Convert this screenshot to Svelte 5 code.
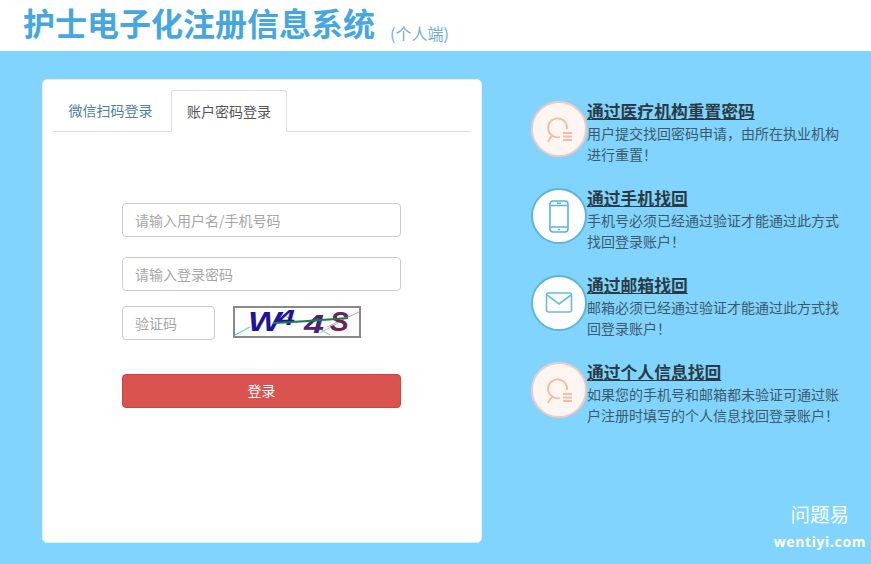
<script>
  const items = [
    { t: '通过医疗机构重置密码', d: ['用户提交找回密码申请，由所在执业机构', '进行重置！'], k: 'user' },
    { t: '通过手机找回', d: ['手机号必须已经通过验证才能通过此方式', '找回登录账户！'], k: 'phone' },
    { t: '通过邮箱找回', d: ['邮箱必须已经通过验证才能通过此方式找', '回登录账户！'], k: 'mail' },
    { t: '通过个人信息找回', d: ['如果您的手机号和邮箱都未验证可通过账', '户注册时填写的个人信息找回登录账户！'], k: 'user' }
  ];
</script>

<div class="page">
  <header class="top">
    <h1>护士电子化注册信息系统</h1>
    <span class="sub">(个人端)</span>
  </header>
  <main class="main">
    <section class="card">
      <nav class="tabs">
        <span class="tab first">微信扫码登录</span>
        <span class="tab active">账户密码登录</span>
      </nav>
      <form class="form">
        <input class="field" placeholder="请输入用户名/手机号码" />
        <input class="field" placeholder="请输入登录密码" />
        <div class="code-row">
          <input class="field code" placeholder="验证码" />
          <svg class="captcha" viewBox="0 0 128 32" width="128" height="32">
            <rect x="1" y="1" width="126" height="30" fill="#fdfdfd" stroke="#8a8a8a" stroke-width="2" />
            <path d="M2 29 L17 21" stroke="#5fd6c8" stroke-width="1.4" fill="none" />
            <path d="M45 6 L64 17 M85 22 L97 29" stroke="#c9a9a0" stroke-width="1" fill="none" />
            <path d="M94 21 L126 6" stroke="#c9a0a8" stroke-width="1" fill="none" />
            <path d="M87 27 L107 16" stroke="#7fd8d0" stroke-width="1" fill="none" />
            <text x="15" y="25" class="cap c1" textLength="33" lengthAdjust="spacingAndGlyphs">W</text>
            <text x="45" y="19" class="cap c2" textLength="17" lengthAdjust="spacingAndGlyphs">4</text>
            <text x="71" y="27" class="cap c3" textLength="20" lengthAdjust="spacingAndGlyphs">4</text>
            <text x="97" y="25" class="cap c4">S</text>
            <path d="M40 17 C65 16 90 14 115 12" stroke="#1a7a4a" stroke-width="2" fill="none" />
          </svg>
        </div>
        <button type="button" class="submit">登录</button>
      </form>
    </section>
    <aside class="list">
      {#each items as it}
        <article class="item">
          <div class="circle {it.k === 'user' ? 'pink' : 'blue'}">
            {#if it.k === 'user'}
              <svg viewBox="0 0 40 40" width="40" height="40" fill="none" stroke="#f7b9aa" stroke-width="1.8">
                <path d="M21 28 A9.500 9.500 0 1 1 28 20" />
                <path d="M14 26 C12 28 10 30 9 33" />
                <path d="M24 24 H33 M24 27.500 H33 M24 31 H33" stroke-width="1.800" />
              </svg>
            {:else if it.k === 'phone'}
              <svg viewBox="0 0 40 40" width="40" height="40" fill="none" stroke="#58b4dc" stroke-width="1.6">
                <rect x="11" y="5" width="18" height="31" rx="3" />
                <path d="M11.500 9.500 H28.500 M11.500 31 H28.500" />
                <path d="M18 7.300 H22 M19 33.500 H21" />
              </svg>
            {:else}
              <svg viewBox="0 0 40 40" width="40" height="40" fill="none" stroke="#6cbcd8" stroke-width="1.6">
                <rect x="7.500" y="10" width="25" height="19" rx="2" />
                <path d="M8 12 L20 21 L32 12" />
              </svg>
            {/if}
          </div>
          <div class="info">
            <h3>{it.t}</h3>
            {#each it.d as line}<p>{line}</p>{/each}
          </div>
        </article>
      {/each}
    </aside>
  </main>
  <div class="mark">
    <span class="m1">问题易</span>
    <span class="m2">wentiyi.com</span>
  </div>
</div>

<style>
  :global(body) { margin: 0; }
  .page {
    position: relative;
    width: 871px;
    height: 564px;
    overflow: hidden;
    background: #81d4fe;
    font-family: "Noto Sans CJK SC", "Liberation Sans", sans-serif;
  }
  .top {
    height: 51px;
    box-sizing: border-box;
    background: #fff;
    padding-left: 23px;
    display: flex;
    align-items: flex-start;
  }
  h1 {
    margin: 0;
    font-size: 32px;
    line-height: 44px;
    font-weight: 700;
    color: #46a7e0;
  }
  .sub {
    margin: 21px 0 0 15px;
    font-size: 16px;
    line-height: 24px;
    color: #6eaed8;
  }
  .main {
    display: flex;
    padding: 28px 0 0 42px;
  }
  .card {
    box-sizing: border-box;
    width: 440px;
    height: 464px;
    background: #fff;
    border-radius: 5px;
    border: 1px solid #e4eef4;
    padding: 10px 10px 0;
  }
  .tabs {
    display: flex;
    height: 41px;
    border-bottom: 1px solid #ddd;
  }
  .tab {
    box-sizing: border-box;
    width: 116px;
    height: 42px;
    font-size: 14px;
    line-height: 40px;
    text-align: center;
    color: #4d7fa0;
  }
  .first { width: 118px; padding-right: 3px; }
  .active {
    color: #555;
    background: #fff;
    border: 1px solid #ddd;
    border-bottom-color: #fff;
    border-radius: 3px 3px 0 0;
  }
  .form {
    display: flex;
    flex-direction: column;
    padding: 71px 0 0 69px;
    width: 279px;
  }
  .field {
    box-sizing: border-box;
    width: 279px;
    height: 34px;
    padding: 0 12px;
    border: 1px solid #ccc;
    border-radius: 4px;
    font: 14px "Noto Sans CJK SC", sans-serif;
    background: #fff;
    outline: none;
    margin-bottom: 20px;
  }
  .field::placeholder { color: #a6a6a6; opacity: 1; }
  .code-row {
    display: flex;
    align-items: flex-start;
    gap: 18px;
    margin-top: -5px;
  }
  .code { width: 93px; margin: 0; }
  .captcha { display: block; }
  .cap {
    font-family: "Liberation Sans", sans-serif;
    font-weight: 700;
    font-style: italic;
  }
  .c1 { font-size: 27px; fill: #1c1499; }
  .c2 { font-size: 22px; fill: #1c1499; }
  .c3 { font-size: 25px; fill: #4a2378; }
  .c4 { font-size: 28px; fill: #6a2458; }
  .submit {
    margin-top: 34px;
    width: 279px;
    height: 34px;
    border: 1px solid #d43f3a;
    border-radius: 4px;
    background: #d9534f;
    color: #fff;
    font: 14px/30px "Noto Sans CJK SC", sans-serif;
    padding: 0 0 2px;
  }
  .list {
    display: flex;
    flex-direction: column;
    gap: 21px;
    margin: 21px 0 0 49px;
  }
  .item {
    display: flex;
    height: 66px;
  }
  .circle {
    box-sizing: border-box;
    width: 56px;
    height: 56px;
    margin-top: 1px;
    border-radius: 50%;
    background: #fff;
    display: flex;
    align-items: center;
    justify-content: center;
    flex: none;
    border: 2px solid;
  }
  .pink { border-color: #f4c9c4; background: #fff6f2; }
  .blue { border-color: #5fb4dc; }
  .info { width: 260px; color: #3c5a6a; margin-top: -1px; }
  h3 {
    margin: 0;
    font-size: 16.800px;
    line-height: 24px;
    font-weight: 700;
    color: #2b3b44;
    text-decoration: underline;
  }
  p {
    margin: 0;
    font-size: 14px;
    line-height: 21px;
    white-space: nowrap;
  }
  .mark {
    position: absolute;
    right: 5px;
    bottom: 12px;
    display: flex;
    flex-direction: column;
    align-items: center;
    color: #fff;
  }
  .m1 { font-size: 19.500px; line-height: 28px; }
  .m2 {
    font-family: "Open Sans", sans-serif;
    font-size: 14px;
    font-weight: 700;
    line-height: 20px;
    margin-top: 4px;
    letter-spacing: 0.600px;
  }
</style>
